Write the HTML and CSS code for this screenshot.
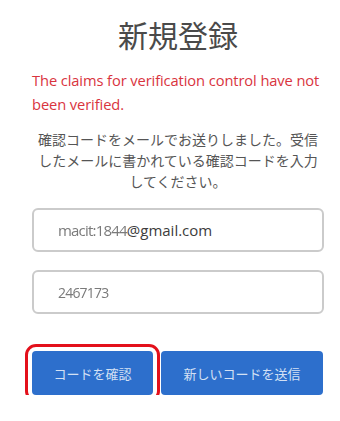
FILE: index.html
```html
<!DOCTYPE html>
<html lang="ja">
<head>
<meta charset="utf-8">
<link rel="stylesheet" href="styles.css">
</head>
<body>
<main class="page">
  <h1 class="title">新規登録</h1>
  <p class="error">The claims for verification control have not been verified.</p>
  <p class="info">確認コードをメールでお送りしました。受信したメールに書かれている確認コードを入力してください。</p>
  <div class="field"><span class="value"><span class="masked">macit:1844</span>@gmail.com</span></div>
  <div class="field"><span class="value masked code">2467173</span></div>
  <div class="actions">
    <button class="btn btn-verify">コードを確認</button>
    <button class="btn btn-send">新しいコードを送信</button>
  </div>
</main>
</body>
</html>
```
FILE: styles.css
```css
html, body {
  margin: 0;
  padding: 0;
  background: #ffffff;
}
body {
  font-family: "Noto Sans", "Noto Sans CJK JP", sans-serif;
}
.page {
  width: 292px;
  margin-left: 32px;
  display: flex;
  flex-direction: column;
}
.title {
  margin: 14px 0 0;
  font-family: "Noto Sans CJK JP", sans-serif;
  font-weight: 400;
  font-size: 30px;
  line-height: 40px;
  color: #4a4a4a;
  text-align: center;
}
.error {
  margin: 14px 0 0;
  font-family: "Open Sans", "Noto Sans", sans-serif;
  font-size: 14.7px;
  line-height: 24px;
  color: #d9343e;
  font-weight: 500;
  letter-spacing: -0.1px;
}
.info {
  margin: 13px 0 0;
  padding: 0 4px;
  font-family: "Noto Sans CJK JP", sans-serif;
  font-size: 14px;
  line-height: 21px;
  color: #555555;
  text-align: center;
}
.field {
  height: 40px;
  border: 2px solid #cbcbcb;
  border-radius: 6px;
  display: flex;
  align-items: center;
  padding-left: 24px;
  margin-top: 16px;
}
.field + .field {
  margin-top: 18px;
}
.value {
  font-family: "Open Sans", "Noto Sans", sans-serif;
  font-size: 15px;
  color: #3c3c3c;
}
.masked {
  color: #7a7a7a;
  letter-spacing: -0.8px;
  filter: blur(0.7px);
}
.code {
  font-size: 14px;
}
.actions {
  display: flex;
  gap: 8px;
  margin-top: 37px;
}
.btn {
  height: 44px;
  border: none;
  border-radius: 4px;
  background: #2d6fcc;
  color: #d3e0f4;
  font-family: "Noto Sans CJK JP", sans-serif;
  font-size: 13px;
  padding: 0;
}
.btn-verify {
  width: 121px;
  outline: 3px solid #e3101b;
  outline-offset: 4px;
}
.btn-send {
  width: 162px;
}
```
